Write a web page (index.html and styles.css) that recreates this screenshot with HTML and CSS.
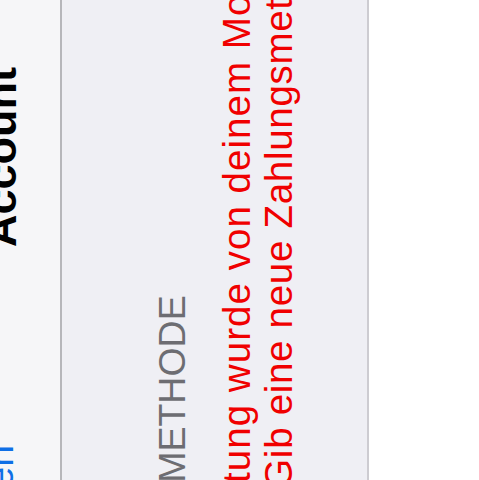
FILE: index.html
```html
<!DOCTYPE html>
<html lang="de">
<head>
<meta charset="utf-8">
<title>Account</title>
<link rel="stylesheet" href="styles.css">
</head>
<body>
<div class="screen">
  <header class="navbar">
    <div class="nav-left"><span class="nav-button">Abbrechen</span></div>
    <h1 class="nav-title">Account</h1>
  </header>
  <main class="content">
    <section class="group">
      <div class="group-header">ZAHLUNGSMETHODE</div>
      <p class="group-footer"><span class="line line-1">Deine Belastung wurde von deinem Mobilfunkanbieter</span><span class="line">abgelehnt. Gib eine neue Zahlungsmethode ein.</span></p>
    </section>
    <div class="cell"></div>
  </main>
</div>
</body>
</html>
```

FILE: styles.css
```css
html, body {
  margin: 0;
  padding: 0;
  background: #ffffff;
  overflow: hidden;
  width: 479px;
  height: 480px;
}

.screen {
  width: 480px;
  height: 479px;
  overflow: hidden;
  transform-origin: 0 0;
  transform: translateY(480px) rotate(-90deg);
  font-family: "Liberation Sans", Arial, sans-serif;
  background: #ffffff;
  display: flex;
  flex-direction: column;
}

.navbar {
  flex: none;
  height: 59.5px;
  background: #f6f6f8;
  border-bottom: 2px solid #b6b6ba;
  display: flex;
  align-items: flex-start;
  overflow: hidden;
}

.nav-left {
  flex: none;
  width: 35px;
  display: flex;
  justify-content: flex-end;
  white-space: nowrap;
  margin-top: -20px;
}

.nav-button {
  font-size: 39px;
  line-height: 39px;
  color: #0f6fe6;
}

.nav-title {
  margin: -22px 0 0 198px;
  font-size: 45px;
  line-height: 45px;
  font-weight: bold;
  color: #000000;
  white-space: nowrap;
}

.content {
  flex: 1;
  display: flex;
  flex-direction: column;
}

.group {
  flex: none;
  background: #efeff4;
  margin-left: -207px;
  padding: 88px 0 67px 0;
  border-bottom: 2px solid #cdccd1;
}

.group-header {
  font-size: 37.5px;
  line-height: 45px;
  color: #6d6d72;
  white-space: nowrap;
}

.group-footer {
  margin: 21px 0 0 0;
  font-size: 38.5px;
  line-height: 42px;
  letter-spacing: 0.7px;
  color: #f00000;
  white-space: nowrap;
}

.line {
  display: block;
}

.line-1 {
  text-indent: -15px;
  letter-spacing: 1.04px;
}

.cell {
  flex: 1;
  background: #ffffff;
}
```
